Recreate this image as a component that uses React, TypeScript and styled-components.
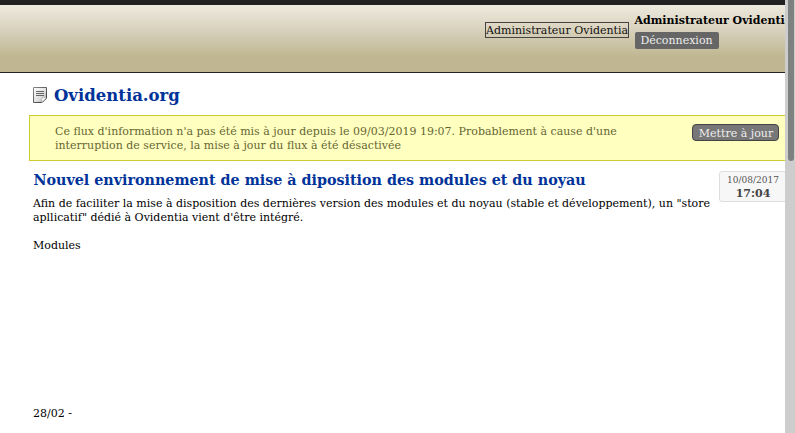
import React from "react";
import styled, { createGlobalStyle } from "styled-components";

const GlobalStyle = createGlobalStyle`
  * { box-sizing: border-box; }
  html, body { margin: 0; padding: 0; overflow: hidden; }
  body { background: #fff; color: #000; font: 11px/14px "DejaVu Serif", serif; }
`;

const Window = styled.div`
  display: flex;
  width: 795px;
  height: 433px;
  overflow: hidden;
`;

const Page = styled.div`
  width: 785px;
  height: 433px;
  overflow: hidden;
  white-space: nowrap;
`;

const ScrollTrack = styled.div`
  width: 10px;
  padding-left: 3px;
  background: #cdcdcd;
`;

const ScrollThumb = styled.div`
  width: 6px;
  height: 161px;
  border-radius: 0 0 3px 3px;
  background: #7d8180;
`;

const Header = styled.header`
  display: flex;
  height: 73px;
  padding-left: 485px;
  gap: 5.5px;
  border-top: 5px solid #222;
  border-bottom: 1px solid #222;
  background: linear-gradient(#edeade 0%, #d8d1bc 38%, #c0b792 76%, #c0b792 100%);
`;

const NameBox = styled.div`
  flex: none;
  width: 144px;
  height: 16px;
  margin-top: 17px;
  border: 1px solid #444;
  color: #111;
  line-height: 16px;
`;

const Account = styled.div`
  flex: none;
  padding-top: 9px;
`;

const AccountName = styled.div`
  font-weight: bold;
`;

const Button = styled.button<{ $outlined?: boolean }>`
  display: block;
  flex: none;
  width: ${(p) => (p.$outlined ? 87 : 84)}px;
  height: 17px;
  margin: ${(p) => (p.$outlined ? "8px 6px 0 0" : "4px 0 0")};
  padding: ${(p) => (p.$outlined ? "0 0 0 1px" : "0")};
  border: ${(p) => (p.$outlined ? "1px solid #444" : "0")};
  border-radius: ${(p) => (p.$outlined ? 4 : 2)}px;
  background: ${(p) => (p.$outlined ? "#777" : "#666")};
  color: #eee;
  font: inherit;
  line-height: ${(p) => (p.$outlined ? 17 : 16)}px;
`;

const Heading = styled.h1`
  display: flex;
  gap: 7px;
  height: 42px;
  margin: 0;
  padding: 12px 0 0 33px;
  color: #039;
  font-size: 16.5px;
  line-height: 21px;

  svg { flex: none; margin-top: 2px; }
`;

const Notice = styled.div`
  display: flex;
  justify-content: space-between;
  height: 46px;
  margin-left: 29px;
  padding-left: 25px;
  border: 1px solid #cc3;
  border-right: 0;
  background: #ffffbf;
  color: #663;
`;

const NoticeText = styled.p`
  margin: 9px 0 0;
`;

const Article = styled.article`
  display: flex;
  padding: 10px 0 0 33px;
`;

const ArticleBody = styled.div`
  flex: none;
  width: 686px;
`;

const ArticleTitle = styled.h2`
  margin: 0 0 8px;
  padding-left: 0.4px;
  color: #039;
  font-size: 14.3px;
  line-height: 18px;
`;

const Paragraph = styled.p`
  margin: 0 0 14px;
`;

const LastLine = styled.p`
  margin: 154px 0 0;
`;

const DateBadge = styled.div`
  flex: none;
  width: 72px;
  height: 31px;
  padding: 2px 4px 0 0;
  border: 1px solid #ddd;
  border-radius: 3px;
  background: #f7f7f7;
  color: #555;
  font-size: 9px;
  line-height: 13px;
  text-align: center;
`;

const Time = styled.strong`
  display: block;
  color: #444;
  font-size: 11px;
  line-height: 14px;
`;

const NoteIcon = () => (
  <svg width="14" height="16" viewBox="0 0 14 16" aria-hidden="true">
    <defs>
      <linearGradient id="paper" x1="0" y1="0" x2="1" y2="1">
        <stop offset="0" stopColor="#fff" />
        <stop offset=".6" stopColor="#ddd" />
        <stop offset="1" stopColor="#999" />
      </linearGradient>
      <linearGradient id="edge" x1="0" y1="0" x2="1" y2="1">
        <stop offset="0" stopColor="#888" />
        <stop offset="1" stopColor="#333" />
      </linearGradient>
    </defs>
    <path d="M.5.5h13v10.5Q12 14 8.500 15.500h-8z" fill="url(#paper)" stroke="url(#edge)" />
    <path d="M9 15V10.500h4.200Q12 13.500 9 15z" fill="#f4f4f4" stroke="#aaa" strokeWidth=".5" />
    <path d="M3 4.500h8M3 6.500h8M3 8.500h8" stroke="#666" />
  </svg>
);

export default function App() {
  return (
    <Window>
      <GlobalStyle />
      <Page>
        <Header>
          <NameBox>Administrateur Ovidentia</NameBox>
          <Account>
            <AccountName>Administrateur Ovidentia</AccountName>
            <Button>Déconnexion</Button>
          </Account>
        </Header>
        <main>
          <Heading><NoteIcon />Ovidentia.org</Heading>
          <Notice>
            <NoticeText>
              Ce flux d'information n'a pas été mis à jour depuis le 09/03/2019 19:07. Probablement à cause d'une<br />
              interruption de service, la mise à jour du flux à été désactivée
            </NoticeText>
            <Button $outlined>Mettre à jour</Button>
          </Notice>
          <Article>
            <ArticleBody>
              <ArticleTitle>Nouvel environnement de mise à diposition des modules et du noyau</ArticleTitle>
              <Paragraph>
                Afin de faciliter la mise à disposition des dernières version des modules et du noyau (stable et développement), un "store<br />
                apllicatif" dédié à Ovidentia vient d'être intégré.
              </Paragraph>
              <Paragraph>Modules</Paragraph>
              <LastLine>28/02 -</LastLine>
            </ArticleBody>
            <DateBadge>10/08/2017<Time>17:04</Time></DateBadge>
          </Article>
        </main>
      </Page>
      <ScrollTrack><ScrollThumb /></ScrollTrack>
    </Window>
  );
}
